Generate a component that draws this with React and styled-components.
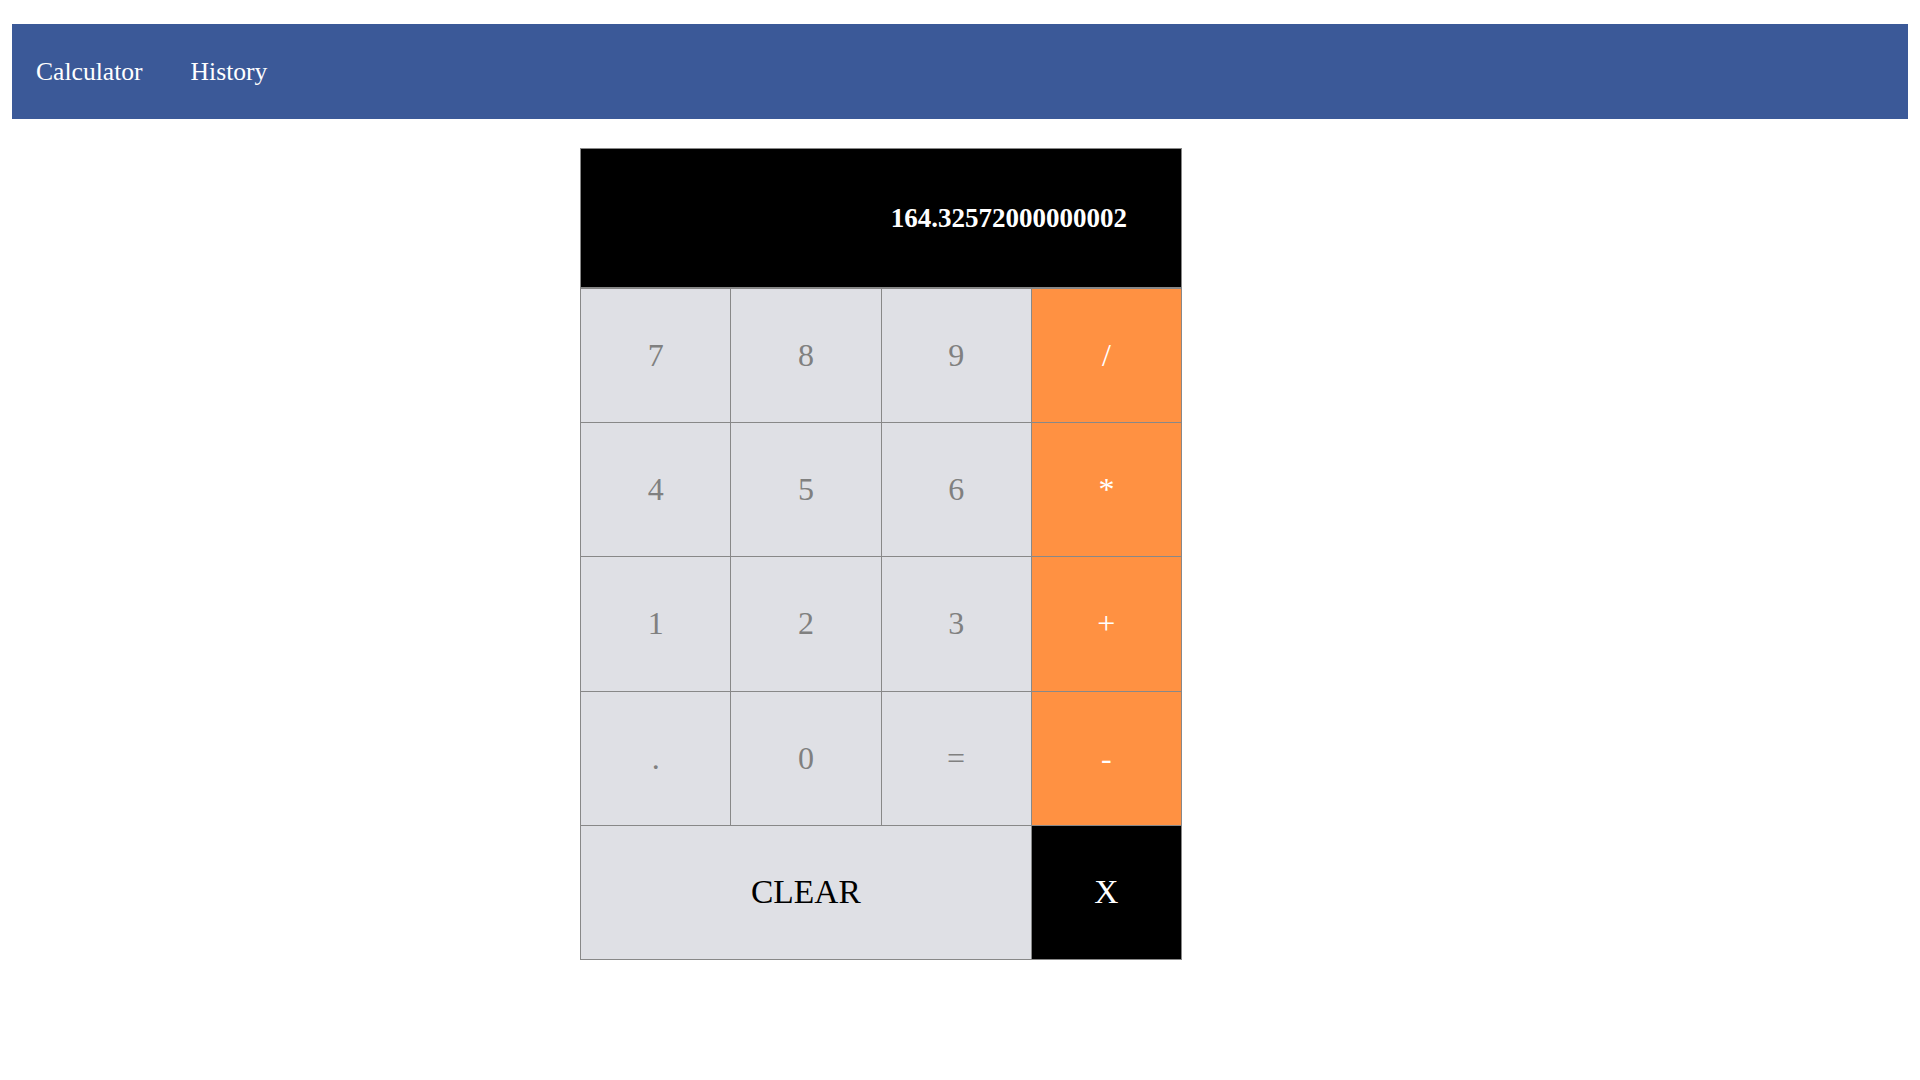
import styled, { createGlobalStyle } from "styled-components";

const GlobalStyle = createGlobalStyle`
body{
    margin: 0;
    background: #fff;
    font-family: "Liberation Serif", "Times New Roman", serif;
}
`

const Nav = styled.nav`
display: flex;
align-items: center;
gap: 48px;
height: 95px;
margin: 24px 12px 0 12px;
padding: 0 24px;
background-color: #3b5998;
a{
    color: #fff;
    font-size: 25.6px;
    text-decoration: none;
}
`

const Calc = styled.section`
display: grid;
grid-template-columns: repeat(4, 1fr);
grid-template-rows: 139px;
grid-auto-rows: 133.2px;
gap: 1px;
width: 602px;
box-sizing: border-box;
margin: 29px 0 0 580px;
border: 1px solid #888;
background-color: #888;
`

const Screen = styled.div`
grid-column: 1 / span 4;
margin-bottom: 1px;
display: flex;
align-items: center;
justify-content: flex-end;
padding-right: 54px;
background-color: #000;
color: #fff;
font-size: 27px;
font-weight: bold;
`

const Key = styled.button`
grid-column: ${({ $wide }) => ($wide ? "span 3" : "auto")};
border: none;
margin: 0;
padding: 0;
font-family: "Liberation Serif", "Times New Roman", serif;
font-size: ${({ $big }) => ($big ? "33.5px" : "32px")};
background-color: ${({ $kind }) =>
    $kind === "op" ? "#ff9142" : $kind === "dark" ? "#000" : "#dfe0e5"};
color: ${({ $kind, $big }) =>
    $kind === "op" || $kind === "dark" ? "#fff" : $big ? "#000" : "#808080"};
cursor: pointer;
`

const rows = [
    ["7", "8", "9", "/"],
    ["4", "5", "6", "*"],
    ["1", "2", "3", "+"],
    [".", "0", "=", "-"],
]

const App = () => {
    const keys = rows.flat().map((k, i) => (
        <Key key={k} $kind={i % 4 === 3 ? "op" : "num"}>{k}</Key>
    ));

    return (
        <>
            <GlobalStyle />
            <Nav>
                <a href="#calc">Calculator</a>
                <a href="#history">History</a>
            </Nav>
            <Calc>
                <Screen>164.32572000000002</Screen>
                {keys}
                <Key $wide $big>CLEAR</Key>
                <Key $kind="dark" $big>X</Key>
            </Calc>
        </>
    )
}

export default App
